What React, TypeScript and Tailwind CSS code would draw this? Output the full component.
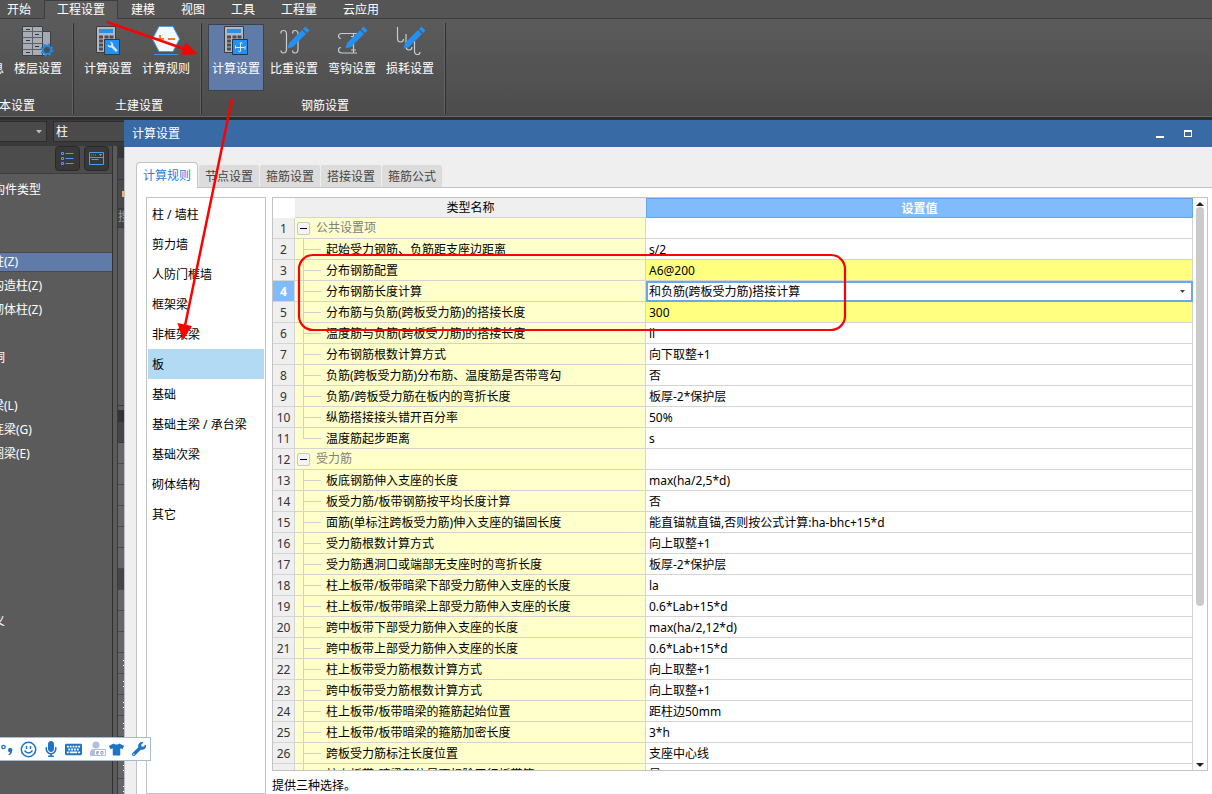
import React, { useState } from 'react';
import clsx from 'clsx';
import { FaKeyboard, FaMicrophone, FaTshirt, FaWrench } from 'react-icons/fa';

type Row = { name: string; value?: string; group?: boolean; last?: boolean; changed?: boolean };

const ribbonTabs = ['开始', '工程设置', '建模', '视图', '工具', '工程量', '云应用'];

const components = [
  '构件类型', '', '', '柱(Z)', '构造柱(Z)', '砌体柱(Z)', '', '洞', '', '梁(L)', '连梁(G)', '圈梁(E)',
  '', '', '', '', '', '', '义',
];

const dialogTabs = ['计算规则', '节点设置', '箍筋设置', '搭接设置', '箍筋公式'];

const categories = [
  '柱 / 墙柱', '剪力墙', '人防门框墙', '框架梁', '非框架梁', '板', '基础', '基础主梁 / 承台梁',
  '基础次梁', '砌体结构', '其它',
];

const rows: Row[] = [
  { name: '公共设置项', group: true },
  { name: '起始受力钢筋、负筋距支座边距离', value: 's/2' },
  { name: '分布钢筋配置', value: 'A6@200', changed: true },
  { name: '分布钢筋长度计算', value: '和负筋(跨板受力筋)搭接计算' },
  { name: '分布筋与负筋(跨板受力筋)的搭接长度', value: '300', changed: true },
  { name: '温度筋与负筋(跨板受力筋)的搭接长度', value: 'll' },
  { name: '分布钢筋根数计算方式', value: '向下取整+1' },
  { name: '负筋(跨板受力筋)分布筋、温度筋是否带弯勾', value: '否' },
  { name: '负筋/跨板受力筋在板内的弯折长度', value: '板厚-2*保护层' },
  { name: '纵筋搭接接头错开百分率', value: '50%' },
  { name: '温度筋起步距离', value: 's', last: true },
  { name: '受力筋', group: true },
  { name: '板底钢筋伸入支座的长度', value: 'max(ha/2,5*d)' },
  { name: '板受力筋/板带钢筋按平均长度计算', value: '否' },
  { name: '面筋(单标注跨板受力筋)伸入支座的锚固长度', value: '能直锚就直锚,否则按公式计算:ha-bhc+15*d' },
  { name: '受力筋根数计算方式', value: '向上取整+1' },
  { name: '受力筋遇洞口或端部无支座时的弯折长度', value: '板厚-2*保护层' },
  { name: '柱上板带/板带暗梁下部受力筋伸入支座的长度', value: 'la' },
  { name: '柱上板带/板带暗梁上部受力筋伸入支座的长度', value: '0.6*Lab+15*d' },
  { name: '跨中板带下部受力筋伸入支座的长度', value: 'max(ha/2,12*d)' },
  { name: '跨中板带上部受力筋伸入支座的长度', value: '0.6*Lab+15*d' },
  { name: '柱上板带受力筋根数计算方式', value: '向上取整+1' },
  { name: '跨中板带受力筋根数计算方式', value: '向上取整+1' },
  { name: '柱上板带/板带暗梁的箍筋起始位置', value: '距柱边50mm' },
  { name: '柱上板带/板带暗梁的箍筋加密长度', value: '3*h' },
  { name: '跨板受力筋标注长度位置', value: '支座中心线' },
  { name: '柱上板带/暗梁部位是否扣除平行板带筋', value: '是' },
];

function FloorIcon() {
  return (
    <svg width="32" height="32" viewBox="0 0 32 32" aria-hidden="true">
      <path d="M20.500 6.500H28.500V30.500H20.500z" fill="#a3a8b1" stroke="#3c3f44" />
      <path d="M.5 1.500H20.500V30.500H.5z" fill="#a9adb6" stroke="#3c3f44" />
      <path d="M10.500 1.500V30.500M.5 6.500H20.500M.5 12.500H20.500M.5 18.500H20.500M.5 24.500H20.500" stroke="#5c6068" />
      <path d="M4 4.500H8M4 15.500H8M4 27.500H8M13 9.500H17M13 21.500H17" stroke="#33363b" />
      <circle cx="25" cy="25" r="5.500" fill="none" stroke="#1e88e5" strokeWidth="2" strokeDasharray="2.200 2.120" />
      <circle cx="25" cy="25" r="4" fill="#4f4f4f" stroke="#1e88e5" strokeWidth="2" />
    </svg>
  );
}

function CalculatorBase() {
  return (
    <>
      <path d="M4.500 1.500H23.500V27.500H4.500z" fill="#b3b7be" stroke="#3a3c40" />
      <path d="M7 4H21V8H7z" fill="#2490f0" />
      <path d="M7 10.500h4v3h-4zM7 14.500h4v3h-4zM7 18.500h4v3h-4zM7 22.500h4v3h-4z" fill="#4a4d53" />
      <path d="M12.500 10.500h4v3h-4zM17.500 10.500h4v3h-4z" fill="#4a4d53" />
    </>
  );
}

function CalcWrenchIcon() {
  return (
    <svg width="32" height="32" viewBox="0 0 32 32" aria-hidden="true">
      <CalculatorBase />
      <path d="M12.500 14.500H27.500V29.500H12.500z" fill="#2490f0" stroke="#35383d" />
      <path d="M15.500 19.500a3.200 3.200 0 0 0 4 3l4.500 4.500 1.700-1.700-4.500-4.500a3.200 3.200 0 0 0-3.500-4l1.800 2-.3 1.500-1.500.4z" fill="#d7eaff" />
    </svg>
  );
}

function CalcAnchorIcon() {
  return (
    <svg width="32" height="32" viewBox="0 0 32 32" aria-hidden="true">
      <CalculatorBase />
      <path d="M12.500 14.500H27.500V29.500H12.500z" fill="#2490f0" stroke="#27334a" />
      <path d="M16 22.500H24.500M20.500 18V26.500M22.500 18.500Q20.500 16 20 19M18 25.500Q20 28.500 20.500 25.500M15.500 20.500v3M25 21v3.500" fill="none" stroke="#d7eaff" />
    </svg>
  );
}

function RuleIcon() {
  return (
    <svg width="32" height="32" viewBox="0 0 32 32" aria-hidden="true">
      <path d="M9 1.500H23L29.500 14 23 26.500H9L2.500 14z" fill="#f4f9ff" stroke="#4a9bea" />
      <path d="M6 14H14M10 10V16M18 14H25" stroke="#f47b20" strokeWidth="2" />
      <path d="M4 29.500H28" stroke="#3d93e8" />
    </svg>
  );
}

function PencilIcon({ hooks }: { hooks: string }) {
  return (
    <svg width="32" height="32" viewBox="0 0 32 32" aria-hidden="true">
      <path d={hooks} fill="none" stroke="#c9ccd1" strokeWidth="1.200" />
      <path d="M9.500 23.500l1.500-5.500L24 5l4 4L15 22z" fill="#2490f0" />
      <path d="M25 4l2.500-2.500L31.500 5.500 29 8z" fill="#2490f0" />
    </svg>
  );
}

const weightHooks = 'M3 8.500V7.500Q3 5.500 5.500 5.500Q8.500 5.500 8.500 9V24Q8.500 28 5.500 28Q3 28 3 25.500M14.500 8.500Q14.500 5.500 17 5.500Q20 5.500 20 9V24Q20 28 17 28Q14.500 28 14.500 25.500';
const bendHooks = 'M5 13.500Q2.500 13.500 2.500 11Q2.500 8.500 6 8.500H22M5 22.500Q2.500 22.500 2.500 25Q2.500 28 6 28H21M17.500 8.500V28M15 11.500h5M15 25h5';
const lossHooks = 'M3.500 2V13Q3.500 17 6.500 17Q9.500 17 9.500 14M12 9V21Q12 25 15 25Q18 25 18 22M20.500 14V26Q20.500 29.500 23.500 29.500Q26 29.500 26 27';

function RibbonButton({ label, icon, active }: { label: string; icon?: React.ReactNode; active?: boolean }) {
  return (
    <button
      type="button"
      className={clsx(
        'flex h-[67px] w-14 shrink-0 flex-col items-center border whitespace-nowrap',
        active ? 'border-[#3a4150] bg-[#617ba8]' : 'border-transparent'
      )}
    >
      <span className="h-8">{icon}</span>
      <span className="mt-1 leading-4">{label}</span>
    </button>
  );
}

function RibbonGroup({ title, children }: { title: string; children: React.ReactNode }) {
  return (
    <section className="my-0.5 flex shrink-0 flex-col border-r border-[#303030] pt-px pr-[7px] pl-1.5 shadow-[inset_-1px_0_#626262]">
      <div className="flex gap-0.5">{children}</div>
      <h2 className="mt-[7px] pl-1 text-center leading-4">{title}</h2>
    </section>
  );
}

function Ribbon() {
  return (
    <header className="h-[120px] shrink-0 border-b-[3px] border-[#2e2e2e] bg-[#555] text-white">
      <nav className="flex h-[19px] border-b border-[#3d3d3d]">
        {ribbonTabs.map((tab) => (
          <button
            key={tab}
            type="button"
            className={clsx(
              'h-[19px] leading-[18px]',
              tab === '开始' && 'pr-[13px] pl-[7px]',
              tab === '工程设置' && 'border-x border-t border-[#3d3d3d] bg-[#5b5b5b] px-3',
              tab !== '开始' && tab !== '工程设置' && 'px-[13px]'
            )}
          >
            {tab}
          </button>
        ))}
      </nav>
      <div className="flex h-[98px] border-b border-[#666] bg-linear-to-b from-[#5b5b5b] to-[#4c4c4c] pt-0.5">
        <div className="flex w-[74px] shrink-0 justify-end overflow-hidden">
          <RibbonGroup title="基本设置">
            <RibbonButton label="工程信息" />
            <RibbonButton label="楼层设置" icon={<FloorIcon />} />
          </RibbonGroup>
        </div>
        <RibbonGroup title="土建设置">
          <RibbonButton label="计算设置" icon={<CalcWrenchIcon />} />
          <RibbonButton label="计算规则" icon={<RuleIcon />} />
        </RibbonGroup>
        <RibbonGroup title="钢筋设置">
          <RibbonButton label="计算设置" icon={<CalcAnchorIcon />} active />
          <RibbonButton label="比重设置" icon={<PencilIcon hooks={weightHooks} />} />
          <RibbonButton label="弯钩设置" icon={<PencilIcon hooks={bendHooks} />} />
          <RibbonButton label="损耗设置" icon={<PencilIcon hooks={lossHooks} />} />
        </RibbonGroup>
      </div>
    </header>
  );
}

function Sidebar() {
  return (
    <aside className="flex w-[124px] shrink-0 flex-col overflow-hidden bg-[#3a3a3a] text-white">
      <div className="flex h-[26px] shrink-0 gap-1.5 pt-px pb-1">
        <button type="button" aria-label="楼层" className="flex w-[47px] items-center justify-end border border-l-0 border-[#2d2d2d] bg-[#4a4a4a] pr-1">
          <svg width="6" height="4" aria-hidden="true"><path d="M0 0h6L3 3.500z" fill="#bbb" /></svg>
        </button>
        <input aria-label="构件" defaultValue="柱" className="min-w-0 flex-1 border border-r-0 border-[#2d2d2d] bg-[#4a4a4a] pl-0.5 outline-none" />
      </div>
      <div className="flex min-h-0 flex-1">
        <div className="flex w-[113px] shrink-0 flex-col border-r border-[#303030] bg-[#5b5b5b]">
          <div className="flex h-7 shrink-0 justify-end gap-1 border-b border-[#3d3d3d] bg-[#4c4c4c] pr-[3px]">
            <button type="button" aria-label="列表" className="flex h-[25px] w-[25px] items-center justify-center rounded-sm border border-[#292929] bg-[#383838]">
              <svg width="13" height="13" fill="none" stroke="#4d9cf0" aria-hidden="true">
                <path d="M.5.500h2v2h-2zM.5 5.500h2v2h-2zM.5 10.500h2v2h-2zM4.500 1.500h8M4.500 6.500h8M4.500 11.500h8" />
              </svg>
            </button>
            <button type="button" aria-label="属性" className="flex h-[25px] w-[25px] items-center justify-center rounded-sm border border-[#292929] bg-[#383838]">
              <svg width="15" height="13" fill="none" stroke="#4d9cf0" aria-hidden="true">
                <path d="M.5.500h14v12H.5zM.5 5.500h14M2.500 7.500h7M2.500 2.500v1M4.500 2.500v1M6.500 2.500v1M10 2.500h3M11.500 3v1" />
              </svg>
            </button>
          </div>
          <ul className="mt-1 overflow-hidden">
            {components.map((item, i) => (
              <li key={i} className="h-6 py-0.5 leading-5">
                <div className={clsx('h-5 whitespace-nowrap', item === '柱(Z)' && 'border-y border-[#4a4a4a] bg-[#617ba8] leading-[18px]')}>
                  <span className={item.includes('(') ? '-ml-2' : '-ml-[7px]'}>{item}</span>
                </div>
              </li>
            ))}
          </ul>
        </div>
        <div className="flex min-w-0 flex-1 flex-col overflow-hidden border-l-4 border-[#5b5b5b] bg-[#3a3a3a] pl-px">
          <div className="h-3 shrink-0 bg-[#363636]" />
          <div className="mb-px h-[21px] shrink-0 bg-[#4a4a4a]" />
          <div className="mb-px flex h-7 shrink-0 items-center justify-end bg-[#4a4a4a]">
            <span className="h-1.5 w-0.5 bg-[#f5b759]" />
          </div>
          <div className="mb-px h-[18px] shrink-0 overflow-hidden bg-[#444] text-[#999]">搜</div>
          <div className="h-[177px] shrink-0 bg-[#5b5b5b]" />
          <div className="mt-px h-1 shrink-0 bg-[#5b5b5b]" />
          <div className="h-3 shrink-0 bg-[#333]" />
          <div className="mb-px h-5 shrink-0 bg-[#454545]" />
          {Array.from({ length: 17 }, (_, i) => (
            <div
              key={i}
              className={clsx(
                'flex h-[21px] shrink-0 flex-col items-end justify-center gap-1 border-b border-[#4a4a4a]',
                i === 6 ? 'bg-[#454545]' : 'bg-[#666]'
              )}
            >
              {i > 9 && <span className="h-px w-px bg-white" />}
              {i > 9 && <span className="h-px w-px bg-white" />}
            </div>
          ))}
        </div>
      </div>
    </aside>
  );
}

function RuleTable() {
  const [method, setMethod] = useState('和负筋(跨板受力筋)搭接计算');

  return (
    <div className="flex min-h-0 flex-1 border border-[#c3c3c3] bg-white">
      <div className="min-w-0 flex-1 overflow-hidden">
        <table className="w-full table-fixed border-separate border-spacing-0">
          <colgroup>
            <col className="w-[22px]" />
            <col className="w-[351px]" />
            <col />
          </colgroup>
          <thead>
            <tr className="h-5">
              <th className="p-0" />
              <th className="border-b border-[#d4d4d4] bg-[#efefef] p-0 pt-px font-normal">类型名称</th>
              <th className="border border-[#64a4ea] bg-[#80bbfb] p-0 pt-px font-bold text-white">设置值</th>
            </tr>
          </thead>
          <tbody>
            {rows.map((row, i) => (
              <tr key={row.name} className="h-[21px]">
                <th
                  scope="row"
                  className={clsx(
                    'border-r border-b border-[#d4d4d4] p-0 pt-0.5',
                    i === 3 ? 'bg-[#80bbfb] font-bold text-white' : 'bg-[#efefef] font-normal text-[#333]'
                  )}
                >
                  {i + 1}
                </th>
                <td className="border-r border-b border-[#d4d4d4] bg-[#ffffcc] p-0">
                  {row.group ? (
                    <div className="flex h-5 items-center gap-1.5 pl-0.5 text-[#808080]">
                      <button type="button" aria-label={`折叠${row.name}`} className="flex h-[13px] w-[13px] items-center justify-center rounded-xs border border-[#c8c8c8] bg-[#f4f4f4]">
                        <span className="h-px w-[7px] bg-black" />
                      </button>
                      <span className="leading-[22px]">{row.name}</span>
                    </div>
                  ) : (
                    <div className="flex h-5 gap-[5px] pl-2 whitespace-nowrap">
                      <span className={clsx('w-[18px] border-l border-[#d0d0d0]', row.last ? 'h-[11px]' : 'h-5')}>
                        <span className="block h-[11px] border-b border-[#d0d0d0]" />
                      </span>
                      <span className="leading-[22px]">{row.name}</span>
                    </div>
                  )}
                </td>
                {i === 3 ? (
                  <td className="p-0">
                    <div className="flex h-[21px] items-center border-2 border-[#6ca8e8] bg-white pr-1.5">
                      <select
                        aria-label={row.name}
                        value={method}
                        onChange={(e) => setMethod(e.target.value)}
                        className="h-[17px] min-w-0 flex-1 appearance-none bg-transparent pl-px leading-[17px] outline-none"
                      >
                        <option>和负筋(跨板受力筋)搭接计算</option>
                        <option>和负筋(跨板受力筋)不搭接计算</option>
                        <option>按照负筋(跨板受力筋)长度计算</option>
                      </select>
                      <svg width="5" height="3" aria-hidden="true"><path d="M0 0h5L2.500 3z" fill="#444" /></svg>
                    </div>
                  </td>
                ) : (
                  <td className={clsx('border-r border-b border-[#d4d4d4] p-0 pt-0.5 pl-[3px]', row.changed && 'bg-[#ffff80]')}>{row.value}</td>
                )}
              </tr>
            ))}
          </tbody>
        </table>
      </div>
      <div className="flex w-[14px] shrink-0 flex-col items-center py-0.5">
        <button type="button" aria-label="向上滚动" className="flex h-[7px] items-center">
          <svg width="8" height="4" aria-hidden="true"><path d="M0 4h8L4 0z" fill="#222" /></svg>
        </button>
        <div className="min-h-0 w-2 flex-1">
          <div className="h-[72%] rounded-full bg-[#cbcbcb]" />
        </div>
        <button type="button" aria-label="向下滚动" className="flex h-[7px] items-center">
          <svg width="8" height="4" aria-hidden="true"><path d="M0 0h8L4 4z" fill="#222" /></svg>
        </button>
      </div>
    </div>
  );
}

function SettingsDialog() {
  const [tab, setTab] = useState('计算规则');
  const [category, setCategory] = useState('板');

  return (
    <main className="flex min-w-0 flex-1 flex-col bg-[#efefef]">
      <div className="flex h-[27px] shrink-0 items-center justify-between bg-[#386ba6] pr-5 pl-2 text-white">
        <h1>计算设置</h1>
        <div className="flex gap-5">
          <button type="button" aria-label="最小化" className="flex h-2 w-2 items-end">
            <span className="h-0.5 w-2 bg-white" />
          </button>
          <button type="button" aria-label="最大化" className="h-[7px] w-2 border border-t-2 border-white" />
        </div>
      </div>
      <div className="flex min-h-0 flex-1 flex-col border-l border-[#b9bdcc] pt-[15px] pl-[11px]">
        <div className="z-10 flex h-[26px] shrink-0 items-end gap-px">
          {dialogTabs.map((name) => (
            <button
              key={name}
              type="button"
              onClick={() => setTab(name)}
              className={clsx(
                name === tab
                  ? 'h-[26px] w-[62px] rounded-t-sm border border-b-0 border-[#c3c3c3] bg-white text-[#2b7de0]'
                  : 'mb-px h-[22px] w-[60px] rounded-t-xs bg-[#dcdcdc] pt-0.5 text-[#444]'
              )}
            >
              {name}
            </button>
          ))}
        </div>
        <div className="-mt-px flex min-h-0 flex-1 gap-1.5 border-t border-l border-[#c3c3c3] bg-white pt-[9px] pr-1 pl-[9px]">
          <ul className="w-[120px] shrink-0 overflow-hidden border border-[#c3c3c3] p-px">
            {categories.map((item) => (
              <li key={item}>
                <button
                  type="button"
                  onClick={() => setCategory(item)}
                  className={clsx('h-[30px] w-full pt-0.5 pl-1 text-left', item === category && 'bg-[#b3daf5]')}
                >
                  {item}
                </button>
              </li>
            ))}
          </ul>
          <div className="flex min-w-0 flex-1 flex-col">
            <RuleTable />
            <p className="h-[23px] shrink-0 pt-[7px] leading-4">提供三种选择。</p>
          </div>
        </div>
      </div>
    </main>
  );
}

function InputMethodBar() {
  return (
    <div className="absolute bottom-[33px] left-0 flex h-6 w-[151px] items-center border border-l-0 border-[#a9bccd] bg-white text-[#1f74c6]">
      <button type="button" aria-label="标点" className="w-5">
        <svg width="14" height="16" aria-hidden="true">
          <circle cx="3.500" cy="6" r="1.700" fill="none" stroke="currentColor" strokeWidth="1.300" />
          <path d="M8 9a2.200 2.200 0 1 1 4 1.300q0 3-3.500 4v-1q1.300-.6 1.500-2A2.200 2.200 0 0 1 8 9z" fill="currentColor" />
        </svg>
      </button>
      <button type="button" aria-label="表情" className="w-[25px]">
        <svg width="17" height="17" fill="none" stroke="currentColor" strokeWidth="1.500" aria-hidden="true">
          <circle cx="8.500" cy="8.500" r="7.200" />
          <path d="M6.500 5v3M10.500 5v3M4.500 9.500q4 5 8 0" />
        </svg>
      </button>
      <button type="button" aria-label="语音" className="w-5"><FaMicrophone size={16} className="-ml-0.5" /></button>
      <button type="button" aria-label="键盘" className="w-6"><FaKeyboard size={17} /></button>
      <button type="button" aria-label="账户" className="w-5">
        <svg width="18" height="16" fill="#b3bfd6" aria-hidden="true">
          <circle cx="7" cy="4" r="3.500" />
          <path d="M1 12q0-4 4-4h5v7H1z" />
          <path d="M5.500 8.500h11v6h-11z" fill="#fff" stroke="#b3bfd6" />
          <path d="M7.500 10.500h2v1h-2v1.500h2M12 10.500h2v2.500h-2z" fill="none" stroke="#8fa0bf" />
        </svg>
      </button>
      <button type="button" aria-label="皮肤" className="w-[23px]"><FaTshirt size={15} /></button>
      <button type="button" aria-label="工具箱"><FaWrench size={14} /></button>
    </div>
  );
}

function Annotations() {
  return (
    <svg className="pointer-events-none absolute top-0 left-0 z-20" width="1212" height="794" aria-hidden="true">
      <path d="M107 22L186 49.500M232 99L184.500 328" stroke="#f00" strokeWidth="2.500" />
      <path d="M185.500 42.500L198 54 181 55zM177.500 323L192 326 183 340z" fill="#f00" />
      <rect x="299" y="255" width="546" height="75" rx="14" fill="none" stroke="#f00" strokeWidth="2.200" />
    </svg>
  );
}

export default function App() {
  return (
    <div className="relative flex h-screen flex-col overflow-hidden bg-[#3a3a3a] font-['Noto_Sans','Noto_Sans_CJK_SC',sans-serif] text-[12px] leading-4 text-black">
      <Ribbon />
      <div className="flex min-h-0 flex-1">
        <Sidebar />
        <SettingsDialog />
      </div>
      <InputMethodBar />
      <Annotations />
    </div>
  );
}
